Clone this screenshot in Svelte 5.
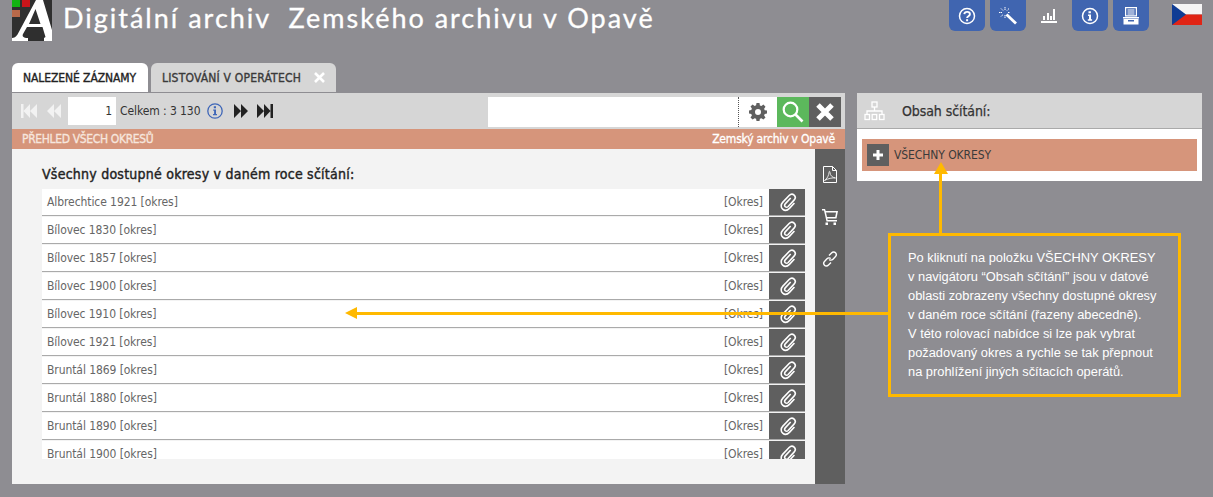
<script>
  const rows = [
    'Albrechtice 1921 [okres]',
    'Bílovec 1830 [okres]',
    'Bílovec 1857 [okres]',
    'Bílovec 1900 [okres]',
    'Bílovec 1910 [okres]',
    'Bílovec 1921 [okres]',
    'Bruntál 1869 [okres]',
    'Bruntál 1880 [okres]',
    'Bruntál 1890 [okres]',
    'Bruntál 1900 [okres]'
  ];
  const clip = 'M17.5 8.5 9.8 16.6c-1.3 1.4-1 3 .1 4s2.700 1 4-.3l8.300-8.900c2.300-2.500 2-5.200.1-7s-4.700-1.900-7 .5l-8.800 9.300c-3.200 3.400-2.900 7.300-.3 9.700s6.400 2.300 9.500-1l7-7.500';
</script>

<div class="page">
  <header class="top">
    <div class="brand">
      <svg class="logo" width="40" height="41" viewBox="0 0 40 41">
        <rect width="40" height="41" fill="#2f2f2f" />
        <rect width="8" height="7" fill="#12b312" />
        <rect x="10" width="8" height="7" fill="#c9141a" />
        <rect y="10" width="8" height="7" fill="#b8694a" />
        <path d="M24 0h7l9 30v11H32V38l1.500-1-3-10H15l-4 7c-1 2 0 4 5 4v3H0v-3c2 0 4-1 5.500-3.500zM23.500 9 17 24h11.500z" fill="#fff" fill-rule="evenodd" />
      </svg>
      <h1>Digitální archiv&nbsp; Zemského archivu v Opavě</h1>
    </div>
    <nav class="tools">
      <button class="tool" aria-label="Nápověda">
        <svg width="18" height="18" viewBox="0 0 18 18" fill="none" stroke="#fff"><circle cx="9" cy="9" r="7.500" stroke-width="1.500"/><path d="M6.300 7.200C6.500 5.500 7.700 4.900 9.100 4.900c1.600 0 2.800.9 2.800 2.300 0 2.100-2.800 2-2.800 3.900" stroke-width="1.900"/><path d="M8.100 12.200h2v2h-2z" fill="#fff" stroke="none"/></svg>
      </button>
      <button class="tool" aria-label="Průvodce">
        <svg width="18" height="18" viewBox="0 0 18 18" fill="none" stroke="#fff"><path d="M7.500 7.500l9.500 9" stroke-width="2.800"/><path d="M6 0v3M6 8v3M0 5.500h3M9 5.500h2M2 1.500l2 2M10 1.500 8 3.500M2 9.500l2-2" stroke-width="1" stroke-dasharray="1.500 .5"/></svg>
      </button>
      <button class="tool plain" aria-label="Statistiky">
        <svg width="16" height="14" viewBox="0 0 16 14" fill="#fff"><path d="M0 12h16v2H0zM2 7h2v4H2zM6 4h2v7H6zM9 7h2v4H9zM12 0h2v11h-2z"/></svg>
      </button>
      <button class="tool" aria-label="Informace">
        <svg width="18" height="18" viewBox="0 0 18 18" fill="none" stroke="#fff"><circle cx="9" cy="9" r="7.500" stroke-width="1.500"/><path d="M7.500 4.200h2.400v2H7.500zM7 7.600h3v4.600h1.100v1.500H6.800v-1.500H8V9.100H7z" fill="#fff" stroke="none"/></svg>
      </button>
      <button class="tool" aria-label="Kartotéka">
        <svg width="16" height="18" viewBox="0 0 16 18" fill="#fff"><path fill-rule="evenodd" d="M2 0h12v9.500H2zM3.200 1.200v7.100h9.600V1.200z"/><path d="M4.500 2.500h7v1h-7zM4.500 4.500h7v1h-7zM4.500 6.500h7v1h-7z"/><path d="M0 10h16v1.500H0zM.5 12H15.500v5.500H.5zM5 13v1.500h6V13z" fill-rule="evenodd"/></svg>
      </button>
      <svg class="flag" width="30" height="21" viewBox="0 0 30 21">
        <rect width="30" height="10.500" fill="#f5f5f5" />
        <rect y="10.500" width="30" height="10.500" fill="#e02415" />
        <path d="M0 0l14 10.500L0 21z" fill="#0f3c94" />
      </svg>
    </nav>
  </header>

  <main class="columns">
    <section class="left">
      <div class="tabs">
        <div class="tab active">NALEZENÉ ZÁZNAMY</div>
        <div class="tab second">
          LISTOVÁNÍ V OPERÁTECH
          <svg class="close" width="11" height="11" viewBox="0 0 11 11" stroke="#fff" stroke-width="2.600"><path d="M1 1l9 9M10 1l-9 9"/></svg>
        </div>
      </div>
      <div class="panel">
        <div class="toolbar">
          <div class="pager">
            <svg class="nav first" width="16" height="14" viewBox="0 0 16 14" fill="#f2f2f2"><path d="M0 0h2.500v14H0zM9 0v14L2.500 7zM16 0v14L9 7z"/></svg>
            <svg class="nav prev" width="14" height="14" viewBox="0 0 14 14" fill="#f2f2f2"><path d="M7 0v14L0 7zM14 0v14L7 7z"/></svg>
            <div class="pageno">1</div>
            <span class="total">Celkem : 3 130</span>
            <svg class="info" width="16" height="16" viewBox="0 0 16 16" fill="none"><circle cx="8" cy="8" r="7.200" stroke="#3f67b8" stroke-width="1.300"/><path d="M6.800 3.300h2.200v1.900H6.800zM6.200 6.500h2.800v4.400h1v1.300H6v-1.300h1.100V7.800h-.9z" fill="#3f67b8"/></svg>
            <svg class="nav next" width="14" height="14" viewBox="0 0 14 14" fill="#222"><path d="M0 0l7 7-7 7zM7 0l7 7-7 7z"/></svg>
            <svg class="nav last" width="16" height="14" viewBox="0 0 16 14" fill="#222"><path d="M0 0l7 7-7 7zM7 0l6.500 7L7 14zM13.500 0H16v14h-2.500z"/></svg>
          </div>
          <div class="search">
            <div class="field"></div>
            <div class="gear">
              <svg width="18" height="18" viewBox="0 0 18 18" fill="#5f5f5f"><path fill-rule="evenodd" d="M7.500 0h3l.4 2.400 1.500.6 2-1.400 2.100 2.100-1.400 2 .6 1.500 2.300.4v3l-2.300.4-.6 1.500 1.400 2-2.100 2.100-2-1.400-1.500.6-.4 2.200h-3l-.4-2.200-1.500-.6-2 1.400L1.500 14.500l1.400-2-.6-1.500L0 10.500v-3l2.300-.4.6-1.500-1.400-2 2.100-2.100 2 1.400 1.500-.6zM9 6a3 3 0 1 0 0 6 3 3 0 0 0 0-6z"/></svg>
            </div>
            <button class="go" aria-label="Hledat">
              <svg width="22" height="22" viewBox="0 0 22 22" fill="none" stroke="#fff"><circle cx="8.500" cy="8.500" r="6.800" stroke-width="2.200"/><path d="M13.500 13.500l7 7" stroke-width="2.600"/></svg>
            </button>
            <button class="clear" aria-label="Zavřít">
              <svg width="18" height="18" viewBox="0 0 18 18" stroke="#fff" stroke-width="5"><path d="M2 2l14 14M16 2 2 16"/></svg>
            </button>
          </div>
        </div>
        <div class="strip">
          <span class="strip-left">PŘEHLED VŠECH OKRESŮ</span>
          <span class="strip-right">Zemský archiv v Opavě</span>
        </div>
        <div class="body">
          <div class="content">
            <h2>Všechny dostupné okresy v daném roce sčítání:</h2>
            <ul class="list">
              {#each rows as row}
                <li>
                  <span class="name">{row}</span>
                  <span class="kind">[Okres]</span>
                  <span class="attach">
                    <svg width="19" height="20" viewBox="0 0 26 28" fill="none" stroke="#fff" stroke-width="2.200"><path d={clip}/></svg>
                  </span>
                </li>
              {/each}
            </ul>
          </div>
          <aside class="side">
            <svg width="14" height="17" viewBox="0 0 14 17" fill="none" stroke="#fff"><path d="M.5.500h9l4 4v12H.500z"/><path d="M9.500.500v4h4"/><path d="M1.500 14.500C4 13 6 9 6 6.500c0-1.500 1-1.500 1 0 0 3 2.500 5 5.500 5.500-3-.5-7.500.5-11 2.500z" stroke-width=".8"/></svg>
            <svg width="16" height="16" viewBox="0 0 16 16" fill="#fff"><path d="M0 0h3l.7 2H16l-1.500 7.500H5.300l.4 1.500H15v1.500H4.500L2 1.500H0zM4 3.500l1 4.500h8.200l.9-4.500z" fill-rule="evenodd"/><rect x="3.500" y="13.500" width="2.500" height="2.500"/><rect x="11.500" y="13.500" width="2.500" height="2.500"/></svg>
            <svg width="16" height="16" viewBox="0 0 16 16" fill="none" stroke="#fff" stroke-width="1.400"><path d="M7 4.500 9.500 2c1.300-1.300 3-1.300 4-.2s1.100 2.700-.2 4L11 8.200c-1.300 1.300-2.800 1.200-3.800.2"/><path d="M9 11.500 6.500 14c-1.300 1.300-3 1.300-4 .2s-1.100-2.700.2-4L5 7.800c1.300-1.300 2.800-1.200 3.800-.2"/></svg>
          </aside>
        </div>
      </div>
    </section>

    <section class="right">
      <div class="right-head">
        <svg width="21" height="20" viewBox="0 0 21 20" fill="none" stroke="#fff" stroke-width="1.300"><rect x="8" y="1" width="5" height="5"/><path d="M10.500 6v4M3 13v-3h15v3"/><rect x="1" y="13.500" width="4.500" height="5"/><rect x="8.200" y="13.500" width="4.500" height="5"/><rect x="15.500" y="13.500" width="4.500" height="5"/></svg>
        <span>Obsah sčítání:</span>
      </div>
      <div class="right-body">
        <div class="node">
          <span class="plus"><svg width="10" height="10" viewBox="0 0 10 10" fill="#fff"><path d="M3.500 0h3v3.500H10v3H6.500V10h-3V6.500H0v-3h3.500z"/></svg></span>
          VŠECHNY OKRESY
        </div>
      </div>
    </section>
  </main>

  <!-- arrows + callout sit on top of the screenshot -->
  <div class="arrow-up"></div>
  <div class="line-up"></div>
  <div class="arrow-left"></div>
  <div class="line-left"></div>
  <div class="callout">
    Po kliknutí na položku VŠECHNY OKRESY<br />
    v navigátoru “Obsah sčítání” jsou v datové<br />
    oblasti zobrazeny všechny dostupné okresy<br />
    v daném roce sčítání (řazeny abecedně).<br />
    V této rolovací nabídce si lze pak vybrat<br />
    požadovaný okres a rychle se tak přepnout<br />
    na prohlížení jiných sčítacích operátů.
  </div>
</div>

<style>
  :global(body) {
    margin: 0;
    background: #8e8d92;
  }

  .page {
    position: relative;
    width: 1213px;
    height: 497px;
    overflow: hidden;
    font-family: "DejaVu Sans", sans-serif;
    font-stretch: condensed;
    font-size: 12px;
    letter-spacing: -0.08px;
    color: #333;
  }

  .top {
    display: flex;
    justify-content: space-between;
    height: 63px;
    padding: 0 11px 0 12px;
    box-sizing: border-box;
  }

  .brand {
    display: flex;
    gap: 11px;
    align-items: flex-start;
  }

  h1 {
    margin: 2px 0 0;
    font-family: Lato, sans-serif;
    font-weight: 400;
    font-size: 27px;
    line-height: 32px;
    letter-spacing: 2px;
    -webkit-text-stroke: 0.3px #fff;
    color: #fff;
    white-space: nowrap;
  }

  .tools {
    display: flex;
    gap: 5px;
    align-items: flex-start;
  }

  .tool {
    width: 36px;
    height: 31px;
    padding: 0;
    border: 0;
    border-radius: 0 0 6px 6px;
    background: #4065b0;
    display: flex;
    align-items: center;
    justify-content: center;
  }

  .tool.plain {
    background: none;
  }

  .flag {
    margin: 4px 0 0 18px;
  }

  .columns {
    display: flex;
    gap: 12px;
    padding: 0 11px 0 12px;
  }

  .left {
    width: 833px;
  }

  .tabs {
    display: flex;
    gap: 3px;
    height: 30px;
  }

  .tab {
    box-sizing: border-box;
    width: 136px;
    height: 29px;
    padding: 0 11px;
    border-radius: 6px 6px 0 0;
    background: #d6d6d6;
    line-height: 30px;
    color: #3a3a3a;
    -webkit-text-stroke: 0.35px currentColor;
    white-space: nowrap;
  }

  .tab.second {
    width: 185px;
    display: flex;
    align-items: center;
    letter-spacing: 0.2px;
  }

  .tab.active {
    background: #fff;
    color: #222;
  }

  .close {
    margin-left: 13px;
  }

  .toolbar {
    display: flex;
    justify-content: space-between;
    height: 36px;
    box-sizing: border-box;
    padding: 4px 4px 2px 9px;
    background: #d6d6d6;
  }

  .pager {
    display: flex;
    align-items: center;
    height: 28px;
  }

  .prev {
    margin-left: 10px;
  }

  .pageno {
    width: 44px;
    height: 28px;
    margin-left: 7px;
    padding-right: 4px;
    background: #fff;
    text-align: right;
    line-height: 28px;
  }

  .total {
    margin-left: 4px;
  }

  .info {
    margin-left: 7px;
  }

  .next {
    margin-left: 11px;
  }

  .last {
    margin-left: 9px;
  }

  .search {
    display: flex;
    height: 30px;
  }

  .field {
    width: 250px;
    height: 30px;
    background: #fff;
    border-right: 1px dotted #555;
  }

  .gear {
    width: 38px;
    background: #fff;
    display: flex;
    align-items: center;
    justify-content: center;
  }

  .go,
  .clear {
    width: 32px;
    height: 30px;
    padding: 0;
    border: 0;
    display: flex;
    align-items: center;
    justify-content: center;
  }

  .go {
    background: #5cb85c;
  }

  .clear {
    background: #5f5f5f;
  }

  .strip {
    display: flex;
    justify-content: space-between;
    height: 20px;
    padding: 0 10px;
    background: #d6957b;
    color: #fff;
    -webkit-text-stroke: 0.3px currentColor;
    line-height: 20px;
  }

  .strip-left {
    color: #f6e6de;
    letter-spacing: -0.35px;
  }

  .strip-right {
    letter-spacing: -0.2px;
  }

  .body {
    display: flex;
    height: 335px;
    background: #f3f3f3;
  }

  .content {
    flex: 1;
    padding: 0 10px 0 30px;
  }

  h2 {
    margin: 16px 0 5px;
    font-size: 14px;
    font-weight: 400;
    line-height: 19px;
    letter-spacing: 0.24px;
    -webkit-text-stroke: 0.4px #222;
    color: #222;
  }

  .list {
    height: 270px;
    margin: 0;
    padding: 0;
    overflow: hidden;
    list-style: none;
  }

  .list li {
    display: flex;
    align-items: center;
    height: 26px;
    padding-left: 5px;
    margin-bottom: 2px;
    background: #fff;
    box-shadow: 0 1px 0 #aaa;
    color: #666;
  }

  .name {
    flex: 1;
  }

  .kind {
    margin-right: 6px;
  }

  .attach {
    width: 36px;
    height: 26px;
    background: #5f5f5f;
    display: flex;
    align-items: center;
    justify-content: center;
  }

  .side {
    width: 30px;
    background: #5f5f5f;
    display: flex;
    flex-direction: column;
    align-items: center;
    gap: 26px;
    padding-top: 17px;
    box-sizing: border-box;
  }

  .right {
    width: 345px;
    margin-top: 30px;
  }

  .right-head {
    display: flex;
    align-items: center;
    height: 35px;
    padding-left: 7px;
    background: #d6d6d6;
    border-bottom: 1px solid #aaa;
    font-size: 14px;
    -webkit-text-stroke: 0.25px #333;
    color: #333;
  }

  .right-head span {
    margin-left: 17px;
  }

  .right-body {
    padding: 10px 5px;
    background: #fff;
  }

  .node {
    display: flex;
    align-items: center;
    height: 32px;
    padding-left: 5px;
    background: #d6957b;
    color: #3a3a3a;
  }

  .plus {
    width: 22px;
    height: 22px;
    margin-right: 5px;
    background: #5f5f5f;
    display: flex;
    align-items: center;
    justify-content: center;
  }

  /* annotation overlay */
  .callout {
    position: absolute;
    left: 888px;
    top: 233px;
    width: 293px;
    height: 164px;
    box-sizing: border-box;
    padding: 12px 0 0 17px;
    border: 3px solid #ffb900;
    font-family: "Liberation Sans", sans-serif;
    font-stretch: normal;
    font-size: 12.85px;
    letter-spacing: 0;
    line-height: 19px;
    color: #fff;
    white-space: nowrap;
  }

  .line-up {
    position: absolute;
    left: 939px;
    top: 174px;
    width: 3px;
    height: 60px;
    background: #ffb900;
  }

  .arrow-up {
    position: absolute;
    left: 934px;
    top: 162px;
    border: 7px solid transparent;
    border-top: 0;
    border-bottom: 12px solid #ffb900;
  }

  .line-left {
    position: absolute;
    left: 356px;
    top: 312px;
    width: 533px;
    height: 3px;
    background: #ffb900;
  }

  .arrow-left {
    position: absolute;
    left: 345px;
    top: 307px;
    border: 6.500px solid transparent;
    border-left: 0;
    border-right: 12px solid #ffb900;
  }
</style>
